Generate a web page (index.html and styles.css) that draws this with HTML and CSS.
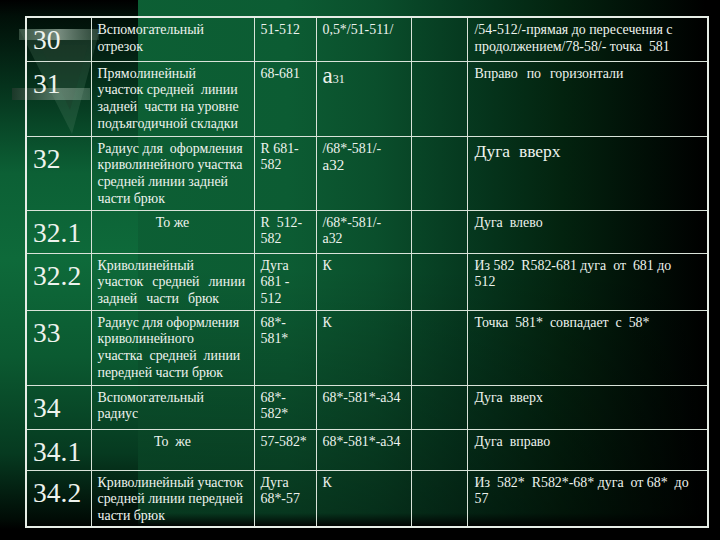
FILE: index.html
```html
<!DOCTYPE html>
<html lang="ru">
<head>
<meta charset="utf-8">
<link rel="stylesheet" href="styles.css">
</head>
<body>
<svg class="deco" width="150" height="140" viewBox="0 0 150 140" aria-hidden="true">
  <defs>
    <linearGradient id="bar1" x1="0" x2="1" y1="0" y2="0">
      <stop offset="0" stop-color="#5e7a68" stop-opacity="0.5"/>
      <stop offset="0.5" stop-color="#b8c8bc" stop-opacity="0.6"/>
      <stop offset="1" stop-color="#9ab2a2" stop-opacity="0.15"/>
    </linearGradient>
    <linearGradient id="bar2" x1="0" x2="1" y1="0" y2="0">
      <stop offset="0" stop-color="#2a3a30" stop-opacity="0.6"/>
      <stop offset="0.6" stop-color="#8aa494" stop-opacity="0.6"/>
      <stop offset="1" stop-color="#a8c0b0" stop-opacity="0.3"/>
    </linearGradient>
  </defs>
  <polygon points="19,29 100,29 72,134" fill="#5f8f74" fill-opacity="0.22"/>
  <polygon points="40,45 88,45 70,110" fill="#1d3a29" fill-opacity="0.35"/>
  <rect x="19" y="29" width="80" height="11" fill="url(#bar1)"/>
  <rect x="12" y="88" width="78" height="12" fill="url(#bar2)"/>
</svg>
<div class="wrap">
<table class="grid">
  <colgroup>
    <col class="c1"><col class="c2"><col class="c3"><col class="c4"><col class="c5"><col class="c6">
  </colgroup>
  <tr class="r1">
    <td class="num">30</td>
    <td>Вспомогательный<br>отрезок</td>
    <td>51-512</td>
    <td>0,5*/51-511/</td>
    <td></td>
    <td>/54-512/-прямая до пересечения с<br>продолжением/78-58/- точка&nbsp; 581</td>
  </tr>
  <tr class="r2">
    <td class="num">31</td>
    <td>Прямолинейный<br>участок средней&nbsp; линии<br>задней&nbsp; части на уровне<br>подъягодичной складки</td>
    <td>68-681</td>
    <td><span class="big-a">а</span><span class="small">31</span></td>
    <td></td>
    <td class="wide">Вправо&nbsp; по&nbsp; горизонтали</td>
  </tr>
  <tr class="r3">
    <td class="num">32</td>
    <td>Радиус для&nbsp; оформления<br>криволинейного участка<br>средней линии задней<br>части брюк</td>
    <td>R 681-<br>582</td>
    <td>/68*-581/-<br><span class="mid">а32</span></td>
    <td></td>
    <td class="large">Дуга&nbsp; вверх</td>
  </tr>
  <tr class="r4">
    <td class="num">32.1</td>
    <td class="center">То же</td>
    <td>R&nbsp; 512-<br>582</td>
    <td>/68*-581/-<br>а32</td>
    <td></td>
    <td>Дуга&nbsp; влево</td>
  </tr>
  <tr class="r5">
    <td class="num">32.2</td>
    <td class="wide">Криволинейный<br>участок&nbsp; средней&nbsp; линии<br>задней&nbsp; части&nbsp; брюк</td>
    <td>Дуга<br>681 -<br>512</td>
    <td>К</td>
    <td></td>
    <td>Из 582&nbsp; R582-681 дуга&nbsp; от&nbsp; 681 до<br>512</td>
  </tr>
  <tr class="r6">
    <td class="num">33</td>
    <td>Радиус для оформления<br>криволинейного<br>участка&nbsp; средней&nbsp; линии<br>передней части брюк</td>
    <td>68*-<br>581*</td>
    <td>К</td>
    <td></td>
    <td>Точка&nbsp; 581*&nbsp; совпадает&nbsp; с&nbsp; 58*</td>
  </tr>
  <tr class="r7">
    <td class="num">34</td>
    <td>Вспомогательный<br>радиус</td>
    <td>68*-<br>582*</td>
    <td>68*-581*-а34</td>
    <td></td>
    <td>Дуга&nbsp; вверх</td>
  </tr>
  <tr class="r8">
    <td class="num">34.1</td>
    <td class="center">То&nbsp; же</td>
    <td>57-582*</td>
    <td>68*-581*-а34</td>
    <td></td>
    <td>Дуга&nbsp; вправо</td>
  </tr>
  <tr class="r9">
    <td class="num">34.2</td>
    <td>Криволинейный участок<br>средней линии передней<br>части брюк</td>
    <td>Дуга<br>68*-57</td>
    <td>К</td>
    <td></td>
    <td>Из&nbsp; 582*&nbsp; R582*-68* дуга&nbsp; от 68*&nbsp; до<br>57</td>
  </tr>
</table>
</div>
</body>
</html>
```
FILE: styles.css
```css
html, body {
  margin: 0;
  padding: 0;
}
body {
  width: 720px;
  height: 540px;
  overflow: hidden;
  position: relative;
  font-family: "Liberation Serif", "Times New Roman", serif;
  color: #eef3ee;
  background-color: #000;
  background-image:
    linear-gradient(to bottom, #000 0%, #010f08 3%, #05321c 16%, #0c6035 32%, #0e6a3a 48%, #0b5a31 66%, #063a20 84%, #010c06 96%, #000 98%),
    linear-gradient(to bottom, rgba(0,0,0,0) 0%, rgba(0,0,0,0) 50%, rgba(0,0,0,0.4) 95%, #000 97.6%),
    linear-gradient(to right, #0d6135 0%, #0c5c33 40%, #0a4f2c 52%, #063a20 64%, #03230f 78%, #010e06 90%, #000 98%);
  background-size: 138px 100%, 100% 100%, 100% 100%;
  background-repeat: no-repeat;
}
.deco {
  position: absolute;
  left: 0;
  top: 0;
  z-index: 0;
}
.wrap {
  position: relative;
  z-index: 1;
  padding: 16px 0 0 25px;
}
.grid {
  border-collapse: collapse;
  table-layout: fixed;
  width: 684px;
  border: 2px solid #e6ede6;
}
.c1 { width: 65px; }
.c2 { width: 163px; }
.c3 { width: 62px; }
.c4 { width: 95px; }
.c5 { width: 56px; }
.c6 { width: 241px; }
.grid td {
  border: 1px solid #d9e3d9;
  vertical-align: top;
  padding: 4px 6px 0 6px;
  font-size: 13.9px;
  line-height: 16.7px;
  white-space: nowrap;
  overflow: hidden;
}
.grid td:last-child {
  padding-left: 7px;
}
.grid td.num {
  font-size: 27.5px;
  line-height: 27px;
  padding-top: 8px;
  padding-left: 6px;
}
.center {
  text-align: center;
}
.big-a {
  font-size: 23px;
  line-height: 20px;
}
.small {
  font-size: 12px;
}
.mid {
  font-size: 15px;
}
.large {
  font-size: 17.5px !important;
  line-height: 20px !important;
  padding-top: 4px !important;
}
.wide {
  word-spacing: 1px;
}
.r1 { height: 44px; }
.r2 { height: 75px; }
.r3 { height: 74px; }
.r4 { height: 43px; }
.r5 { height: 57px; }
.r6 { height: 75px; }
.r7 { height: 44px; }
.r8 { height: 41px; }
.r9 { height: 57px; }
```
